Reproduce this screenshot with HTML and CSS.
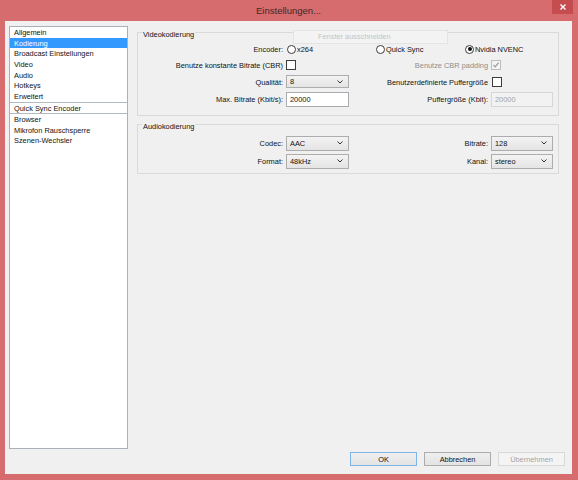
FILE: index.html
```html
<!DOCTYPE html>
<html lang="de">
<head>
<meta charset="UTF-8">
<title>Einstellungen...</title>
<link rel="stylesheet" href="styles.css">
</head>
<body>
<div class="window">
    <div class="titlebar">
        <span class="title">Einstellungen...</span>
        <span class="close">
            <svg width="6" height="6" viewBox="0 0 6 6"><path d="M0.5 0.5 L5.5 5.5 M5.5 0.5 L0.5 5.5" stroke="#fff" stroke-width="1.4"/></svg>
        </span>
    </div>
    <div class="client">
        <div class="main">
            <div class="sidebar">
                <ul class="list">
                    <li>Allgemein</li>
                    <li class="selected">Kodierung</li>
                    <li>Broadcast Einstellungen</li>
                    <li>Video</li>
                    <li>Audio</li>
                    <li>Hotkeys</li>
                    <li>Erweitert</li>
                </ul>
                <div class="list-sep">Quick Sync Encoder</div>
                <ul class="list">
                    <li>Browser</li>
                    <li>Mikrofon Rauschsperre</li>
                    <li>Szenen-Wechsler</li>
                </ul>
            </div>

            <div class="panel">
                <div class="group video">
                    <div class="group-title">Videokodierung</div>
                    <div class="form">
                        <label class="lbl">Encoder:</label>
                        <div class="radios">
                            <span class="opt"><span class="radio"></span>x264</span>
                            <span class="opt"><span class="radio"></span>Quick Sync</span>
                            <span class="opt"><span class="radio on"></span>Nvidia NVENC</span>
                        </div>

                        <label class="lbl">Benutze konstante Bitrate (CBR)</label>
                        <div><span class="check"></span></div>
                        <label class="lbl disabled">Benutze CBR padding</label>
                        <div>
                            <span class="check checked-off">
                                <svg width="8" height="8" viewBox="0 0 8 8"><path d="M1.5 4 L3.2 5.8 L6.6 1.6" fill="none" stroke="#9a9a9a" stroke-width="1.2"/></svg>
                            </span>
                        </div>

                        <label class="lbl">Qualität:</label>
                        <div class="combo small">8<svg class="arrow" width="6" height="4" viewBox="0 0 6 4"><path d="M0.5 0.5 L3 3 L5.5 0.5" fill="none" stroke="#333" stroke-width="1"/></svg></div>
                        <label class="lbl">Benutzerdefinierte Puffergröße</label>
                        <div><span class="check wide"></span></div>

                        <label class="lbl">Max. Bitrate (Kbit/s):</label>
                        <div class="field">20000</div>
                        <label class="lbl">Puffergröße (Kbit):</label>
                        <div class="field off">20000</div>
                    </div>
                </div>

                <div class="group audio">
                    <div class="group-title">Audiokodierung</div>
                    <div class="form">
                        <label class="lbl">Codec:</label>
                        <div class="combo">AAC<svg class="arrow" width="6" height="4" viewBox="0 0 6 4"><path d="M0.5 0.5 L3 3 L5.5 0.5" fill="none" stroke="#333" stroke-width="1"/></svg></div>
                        <label class="lbl">Bitrate:</label>
                        <div class="combo">128<svg class="arrow" width="6" height="4" viewBox="0 0 6 4"><path d="M0.5 0.5 L3 3 L5.5 0.5" fill="none" stroke="#333" stroke-width="1"/></svg></div>

                        <label class="lbl">Format:</label>
                        <div class="combo">48kHz<svg class="arrow" width="6" height="4" viewBox="0 0 6 4"><path d="M0.5 0.5 L3 3 L5.5 0.5" fill="none" stroke="#333" stroke-width="1"/></svg></div>
                        <label class="lbl">Kanal:</label>
                        <div class="combo">stereo<svg class="arrow" width="6" height="4" viewBox="0 0 6 4"><path d="M0.5 0.5 L3 3 L5.5 0.5" fill="none" stroke="#333" stroke-width="1"/></svg></div>
                    </div>
                </div>
            </div>
        </div>

        <div class="buttons">
            <button class="btn default">OK</button>
            <button class="btn">Abbrechen</button>
            <button class="btn" disabled>Übernehmen</button>
        </div>

        <!-- leftover window from a capture, drawn over the group box -->
        <div class="ghost">Fenster ausschneiden</div>
    </div>
</div>
</body>
</html>
```

FILE: styles.css
```css
body {
  margin: 0;
  font-family: "Liberation Sans", Arial, sans-serif;
  font-size: 7.4px;
  color: #111;
}

.window {
  width: 578px;
  height: 480px;
  box-sizing: border-box;
  padding: 0 6px 6px 5px;
  background-color: #d66c6e;
}

.titlebar {
  height: 21px;
  position: relative;
  text-align: center;
}

.title {
  line-height: 21px;
  font-size: 9.5px;
  color: #3d2a2b;
}

.close {
  position: absolute;
  top: 0;
  right: -1px;
  width: 21px;
  height: 14px;
  background-color: #c54d50;
  display: flex;
  align-items: center;
  justify-content: center;
}

.client {
  height: 453px;
  background-color: #f0f0f0;
  position: relative;
  display: flex;
  flex-direction: column;
}

.main {
  display: flex;
  align-items: flex-start;
  height: 428px;
}

/* left navigation */
.sidebar {
  width: 119px;
  height: 423px;
  box-sizing: border-box;
  margin: 5px 0 0 4px;
  border: 1px solid #a9b0b9;
  background-color: #fff;
}

.list {
  list-style: none;
  margin: 0;
  padding: 0;
}

.list li {
  height: 10.7px;
  line-height: 12.4px;
  padding-left: 4px;
  white-space: nowrap;
}

.list li.selected {
  background-color: #3399ff;
  color: #fff;
}

.list-sep {
  height: 10px;
  line-height: 11.4px;
  padding-left: 4px;
  border-top: 1px solid #b4bac2;
  border-bottom: 1px solid #b4bac2;
}

/* right side */
.panel {
  width: 422px;
  margin: 11px 0 0 9px;
  display: flex;
  flex-direction: column;
  gap: 8px;
}

.group {
  border: 1px solid #dadada;
}

.group-title {
  width: max-content;
  margin: -3px 0 0 4px;
  padding: 0 1px;
  line-height: 9px;
  background-color: #f0f0f0;
}

.form {
  display: grid;
  grid-template-columns: 145px 63px 136px 62px;
  column-gap: 3px;
  align-items: center;
}

.video .form {
  grid-template-rows: 16px 16px 17px 18px;
  margin-top: 2px;
  padding-bottom: 7px;
}

.audio .form {
  grid-template-rows: 18px 18px;
  margin-top: 3px;
  padding-bottom: 3px;
}

.lbl {
  text-align: right;
  white-space: nowrap;
  padding-top: 1px;
}

.lbl.disabled {
  color: #8e8e8e;
}

.radios {
  grid-column: 2 / span 3;
  display: flex;
}

.opt {
  width: 89px;
  display: flex;
  align-items: center;
  gap: 1px;
  padding-left: 1px;
}

.radio {
  width: 9px;
  height: 9px;
  box-sizing: border-box;
  border: 1px solid #3c3c3c;
  border-radius: 50%;
  background-color: #fff;
  position: relative;
}

.radio.on::after {
  content: "";
  position: absolute;
  left: 1.5px;
  top: 1.5px;
  width: 4px;
  height: 4px;
  border-radius: 50%;
  background-color: #111;
}

.check {
  display: flex;
  align-items: center;
  justify-content: center;
  width: 10px;
  height: 10px;
  box-sizing: border-box;
  border: 1px solid #3c3c3c;
  background-color: #fff;
}

.check.wide {
  margin-left: 1px;
}

.check.checked-off {
  border-color: #bdbdbd;
  background-color: #f4f4f4;
}

.combo {
  height: 15px;
  box-sizing: border-box;
  border: 1px solid #adadad;
  background: linear-gradient(#f3f3f3, #e4e4e4);
  padding-left: 3px;
  display: flex;
  align-items: center;
  justify-content: space-between;
}

.combo.small {
  height: 13px;
}

.combo .arrow {
  margin-right: 5px;
}

.field {
  height: 15px;
  box-sizing: border-box;
  border: 1px solid #a9abb0;
  background-color: #fff;
  padding-left: 3px;
  line-height: 14px;
}

.field.off {
  border-color: #d6d6d6;
  background-color: #f2f2f2;
  color: #a2a2a2;
}

/* dialog buttons */
.buttons {
  display: flex;
  justify-content: flex-end;
  gap: 7px;
  margin-top: 3px;
  padding-right: 7px;
}

.btn {
  width: 67px;
  height: 14px;
  padding: 0;
  font-family: inherit;
  font-size: 7.4px;
  color: #111;
  border: 1px solid #acacac;
  background: linear-gradient(#efefef, #e3e3e3);
}

.btn.default {
  border-color: #7eb4ea;
}

.btn:disabled {
  color: #a5a5a5;
  border-color: #d9d9d9;
  background: #f4f4f4;
}

.ghost {
  position: absolute;
  left: 288px;
  top: 9px;
  width: 155px;
  height: 14px;
  box-sizing: border-box;
  padding-left: 24px;
  line-height: 12px;
  border: 1px solid #e4e4e4;
  background-color: #f3f3f3;
  color: #c4c4c4;
}
```
